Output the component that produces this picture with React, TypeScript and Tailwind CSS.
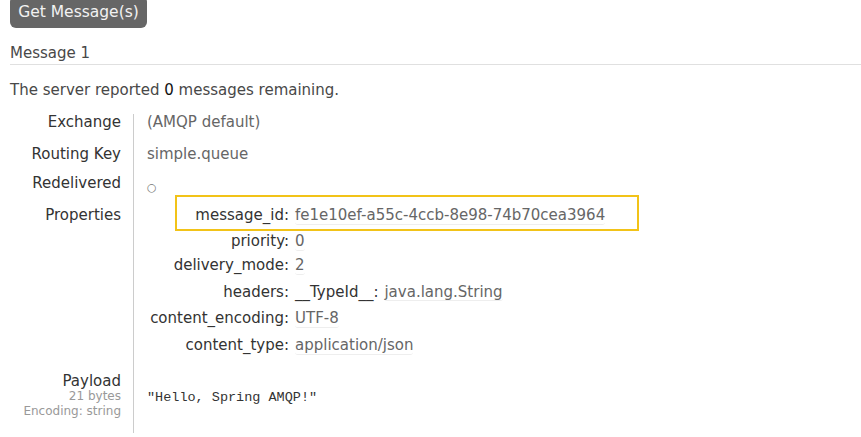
const props: { key: string; h: string; value: React.ReactNode }[] = [
  { key: "message_id", h: "h-[26px]", value: <Val>fe1e10ef-a55c-4ccb-8e98-74b70cea3964</Val> },
  { key: "priority", h: "h-[24px]", value: <Val>0</Val> },
  { key: "delivery_mode", h: "h-[27px]", value: <Val>2</Val> },
  {
    key: "headers",
    h: "h-[26px]",
    value: (
      <span className="flex gap-[6px]">
        <span className="text-[#333]">__TypeId__:</span>
        <Val>java.lang.String</Val>
      </span>
    ),
  },
  { key: "content_encoding", h: "h-[27px]", value: <Val>UTF-8</Val> },
  { key: "content_type", h: "h-[26px]", value: <Val>application/json</Val> },
];

function Val({ children }: { children: React.ReactNode }) {
  return <span className="text-[#666] border-b border-[#eee] rounded-[3px]">{children}</span>;
}

function Row({ label, h, children }: { label: React.ReactNode; h: string; children: React.ReactNode }) {
  return (
    <div className={`flex ${h}`}>
      <div className="w-[134px] shrink-0 border-r border-[#ccc] pr-[12px] text-right text-[#333]">{label}</div>
      <div className="pl-[13px] text-[#666]">{children}</div>
    </div>
  );
}

export default function App() {
  return (
    <div className="relative h-[437px] w-[861px] overflow-hidden bg-white pl-[10px] text-[15px] leading-[16px] text-[#484848] font-['DejaVu_Sans',sans-serif]">
      <button className="-mt-[4px] h-[32px] w-[137px] rounded-[6px] bg-[#666] text-[15.5px] text-[#f2f2f2]">
        Get Message(s)
      </button>

      <div className="mt-[17px] border-b border-[#e0e0e0] pb-[3px]">Message 1</div>

      <p className="mt-[17px]">
        The server reported <span className="text-[#111]">0</span> messages remaining.
      </p>

      <div className="mt-[16px] -ml-[10px]">
        <Row label="Exchange" h="h-[32px]">(AMQP default)</Row>
        <Row label="Routing Key" h="h-[29px]">simple.queue</Row>
        <Row label="Redelivered" h="h-[32px]">
          <span className="relative top-[3px] text-[11px] text-[#777]">○</span>
        </Row>
        <Row label="Properties" h="h-[166px]">
          <div className="flex flex-col">
            {props.map((p) => (
              <div key={p.key} className={`flex ${p.h}`}>
                <div className="w-[148px] shrink-0 pr-[6px] text-right text-[#333]">{p.key}:</div>
                <div>{p.value}</div>
              </div>
            ))}
          </div>
        </Row>
        <Row
          label={
            <div>
              <div>Payload</div>
              <div className="text-[12px] leading-[15px] text-[#999]">21 bytes</div>
              <div className="text-[12px] leading-[15px] text-[#999]">Encoding: string</div>
            </div>
          }
          h="h-[60px]"
        >
          <div className="pt-[17px] font-['Liberation_Mono',monospace] text-[13.5px] text-[#333]">
            ″Hello, Spring AMQP!″
          </div>
        </Row>
      </div>

      <div className="absolute left-[175px] top-[195px] h-[36px] w-[464px] border-2 border-[#f2c318]" />
    </div>
  );
}
